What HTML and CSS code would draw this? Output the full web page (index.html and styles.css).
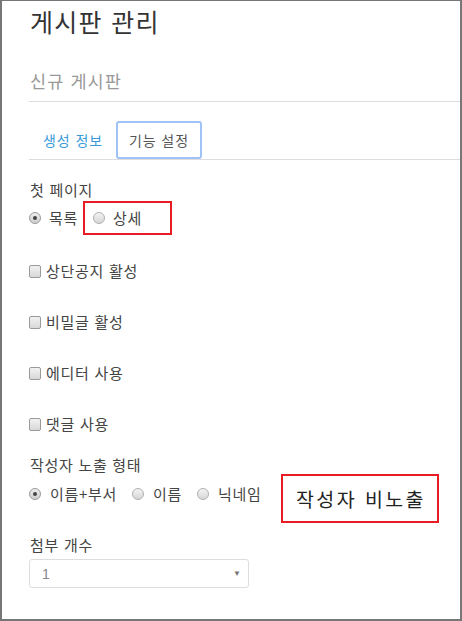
FILE: index.html
```html
<!DOCTYPE html>
<html lang="ko">
<head>
<meta charset="utf-8">
<link rel="stylesheet" href="styles.css">
</head>
<body>
<div class="frame">
  <div class="header">
    <h1 class="title">게시판 관리</h1>
    <h2 class="subtitle">신규 게시판</h2>
  </div>
  <div class="tabs">
    <span class="tab">생성 정보</span>
    <span class="tab active">기능 설정</span>
  </div>
  <div class="label first">첫 페이지</div>
  <div class="radio-row">
    <span class="opt"><span class="radio checked"></span>목록</span>
    <span class="opt marked"><span class="radio"></span>상세</span>
  </div>
  <div class="check-row r1"><span class="check"></span>상단공지 활성</div>
  <div class="check-row"><span class="check"></span>비밀글 활성</div>
  <div class="check-row"><span class="check"></span>에디터 사용</div>
  <div class="check-row"><span class="check"></span>댓글 사용</div>
  <div class="label author">작성자 노출 형태</div>
  <div class="radio-row2">
    <span class="opt"><span class="radio checked"></span>이름+부서</span>
    <span class="opt"><span class="radio"></span>이름</span>
    <span class="opt"><span class="radio"></span>닉네임</span>
  </div>
  <div class="label attach">첨부 개수</div>
  <div class="select"><span class="val">1</span><span class="caret">▼</span></div>
  <div class="note">작성자 비노출</div>
</div>
</body>
</html>
```
FILE: styles.css
```css
* { box-sizing: border-box; }
html, body { margin: 0; padding: 0; background: #fff; }
body {
  font-family: "Noto Sans CJK KR", "Noto Sans", sans-serif;
  color: #444;
}
.frame {
  position: relative;
  width: 462px;
  height: 621px;
  border: 2px solid #767676;
  border-top-width: 1px;
  padding-left: 27px;
  overflow: hidden;
}
.header {
  border-bottom: 1px solid #ddd;
  padding-bottom: 5px;
}
.title {
  margin: 0;
  font-size: 25px;
  font-weight: 400;
  line-height: 40px;
  height: 40px;
  color: #333;
  padding-left: 1px;
  letter-spacing: 1.3px;
}
.subtitle {
  margin: 25px 0 0;
  font-size: 17.5px;
  font-weight: 400;
  line-height: 30px;
  color: #999;
  padding-left: 1px;
  letter-spacing: 1.1px;
}
.tabs {
  margin-top: 19px;
  display: flex;
  gap: 2px;
  border-bottom: 1px solid #ddd;
  height: 39px;
}
.tab {
  height: 38px;
  line-height: 34px;
  font-size: 14px;
  padding: 0 11px 0 14px;
  border-top: 2px solid transparent;
  border-bottom: 2px solid transparent;
  color: #3a9ad9;
  letter-spacing: 0.9px;
}
.tab.active {
  width: 86px;
  text-align: center;
  padding: 0;
  color: #555;
  border: 2px solid #9fc2f7;
  border-radius: 3px;
}
.label {
  font-size: 15px;
  line-height: 20px;
  height: 20px;
  padding-left: 1px;
  color: #444;
  letter-spacing: 0.7px;
}
.label.first { margin-top: 20px; }
.radio-row {
  margin-top: 1px;
  height: 34px;
  display: flex;
  align-items: center;
  font-size: 15px;
  letter-spacing: 0.7px;
}
.opt {
  display: inline-flex;
  align-items: center;
  line-height: 20px;
}
.radio {
  width: 12px;
  height: 12px;
  border-radius: 50%;
  border: 1px solid #b0b0b0;
  background: linear-gradient(#f4f4f4, #d6d6d6);
  margin-right: 8px;
  position: relative;
  flex: none;
}
.radio.checked {
  border-color: #9a9a9a;
  background: linear-gradient(#eeeeee, #cfcfcf);
}
.radio.checked::after {
  content: "";
  position: absolute;
  left: 3px;
  top: 3px;
  width: 4px;
  height: 4px;
  border-radius: 50%;
  background: #444;
}
.radio-row .opt:first-child { margin-right: 5px; }
.marked {
  height: 34px;
  border: 2px solid #e81c24;
  padding: 0 28px 0 8px;
}
.check-row {
  display: flex;
  align-items: center;
  height: 20px;
  line-height: 20px;
  font-size: 15px;
  margin-top: 31px;
  letter-spacing: 0.7px;
}
.check-row.r1 { margin-top: 26px; }
.check {
  width: 12px;
  height: 13px;
  border: 1px solid #9a9a9a;
  border-radius: 2px;
  background: linear-gradient(#f2f2f2, #d8d8d8);
  margin-right: 5px;
  flex: none;
}
.label.author { margin-top: 21px; }
.radio-row2 {
  margin-top: 9px;
  height: 20px;
  display: flex;
  align-items: center;
  gap: 15px;
  font-size: 15px;
  letter-spacing: 0.7px;
}
.radio-row2 .radio { margin-right: 9px; }
.label.attach { margin-top: 31px; }
.select {
  margin-top: 4px;
  width: 220px;
  height: 29px;
  border: 1px solid #ddd;
  border-radius: 3px;
  display: flex;
  align-items: center;
  justify-content: space-between;
  padding: 0 7px 0 12px;
  font-family: "Liberation Sans", Arial, sans-serif;
}
.val { font-size: 14px; color: #888; }
.caret { font-size: 8px; color: #777; }
.note {
  position: absolute;
  left: 279px;
  top: 473px;
  width: 158px;
  height: 49px;
  border: 2px solid #e81c24;
  padding-left: 13px;
  line-height: 45px;
  font-size: 19.5px;
  color: #222;
  letter-spacing: 2.4px;
}
```
